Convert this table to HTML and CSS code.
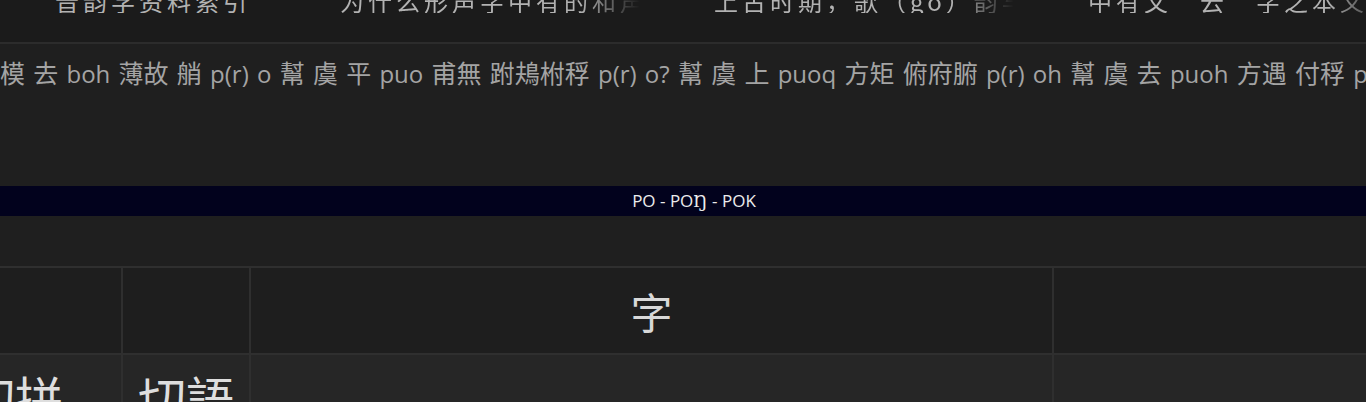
FILE: index.html
```html
<!DOCTYPE html>
<html lang="zh">
<head>
    <meta charset="UTF-8">
    <meta name="viewport" content="width=device-width, initial-scale=1.0">
    <title>PO - POŊ - POK</title>
    <link rel="stylesheet" href="styles.css">
</head>
<body>
    <nav class="topbar">
        <div class="links">
            <a class="link first" href="#"><span>音韵学资料索引</span></a>
            <a class="link" href="#"><span>为什么形声字中有的和声符读音不同</span></a>
            <a class="link" href="#"><span>上古时期，歌（go）韵与支韵的关系</span></a>
            <a class="link" href="#"><span>中有文“云”字之本义为何</span></a>
        </div>
    </nav>

    <section class="entry">
        <p class="readings"><span class="h">模</span> <span class="h">去</span> boh <span class="h">薄故</span> <span class="h">艄</span> p(r) o <span class="h">幫</span> <span class="h">虞</span> <span class="h">平</span> puo <span class="h">甫無</span> <span class="h">跗鳺柎稃</span> p(r) o? <span class="h">幫</span> <span class="h">虞</span> <span class="h">上</span> puoq <span class="h">方矩</span> <span class="h">俯府腑</span> p(r) oh <span class="h">幫</span> <span class="h">虞</span> <span class="h">去</span> puoh <span class="h">方遇</span> <span class="h">付稃</span> p(r) oh <span class="h">幫</span> <span class="h">模</span> <span class="h">平</span> po</p>

        <h2 class="rhyme">PO - PO<span class="eng">Ŋ</span> - POK</h2>

        <table class="chart">
            <thead>
                <tr>
                    <th></th>
                    <th></th>
                    <th>字</th>
                    <th></th>
                </tr>
            </thead>
            <tbody>
                <tr>
                    <td>切拼</td>
                    <td>切語</td>
                    <td></td>
                    <td></td>
                </tr>
            </tbody>
        </table>
    </section>
</body>
</html>
```

FILE: styles.css
```css
body {
    margin: 0;
    background-color: #1f1f1f;
    font-family: "Open Sans", "Noto Sans CJK SC", sans-serif;
    overflow: hidden;
}
.topbar {
    height: 42px;
    background-color: #1b1b1b;
    border-bottom: 2px solid #2c2c2c;
    overflow: hidden;
}
.links {
    display: flex;
    margin-top: -11px;
    padding-left: 55px;
    font-family: "Noto Sans CJK SC", sans-serif;
    font-size: 24px;
    line-height: 24px;
    letter-spacing: 4px;
}
.link {
    flex: none;
    width: 374px;
    color: #b2b2b2;
    text-decoration: none;
    white-space: nowrap;
}
.link.first {
    width: 285px;
}
.link span {
    display: block;
    width: 300px;
    overflow: hidden;
    -webkit-mask-image: linear-gradient(to right, #000 80%, transparent);
    mask-image: linear-gradient(to right, #000 80%, transparent);
}
.link.first span {
    -webkit-mask-image: none;
    mask-image: none;
}
.entry {
    padding-top: 8px;
}
.readings {
    margin: 0;
    height: 134px;
    line-height: 40px;
    font-size: 24px;
    word-spacing: 2px;
    color: #a4a4a4;
    white-space: nowrap;
    overflow: hidden;
}
.h {
    font-family: "Noto Sans CJK SC", sans-serif;
    font-size: 25px;
}
.rhyme {
    margin: 0;
    height: 30px;
    padding-left: 22px;
    background-color: #02021d;
    color: #ececec;
    font-size: 17px;
    font-weight: normal;
    line-height: 30px;
    text-align: center;
}
.eng {
    font-family: "DejaVu Serif", serif;
}
.chart {
    margin-top: 50px;
    margin-left: -93px;
    width: 1540px;
    table-layout: fixed;
    border-collapse: collapse;
    font-family: "Noto Sans CJK SC", sans-serif;
}
.chart th,
.chart td {
    border: 2px solid #2f2f2f;
    padding: 0;
    text-align: center;
    font-weight: normal;
}
.chart th:nth-child(1) { width: 212px; }
.chart th:nth-child(2) { width: 126px; }
.chart th:nth-child(3) { width: 801px; }
.chart th:nth-child(4) { width: 401px; }
.chart thead th {
    height: 85px;
    background-color: #1e1e1e;
    color: #d8d8d8;
    font-size: 42px;
}
.chart tbody td {
    padding-top: 6px;
    background-color: #262626;
    color: #dedede;
    font-size: 48px;
    vertical-align: top;
}
```
